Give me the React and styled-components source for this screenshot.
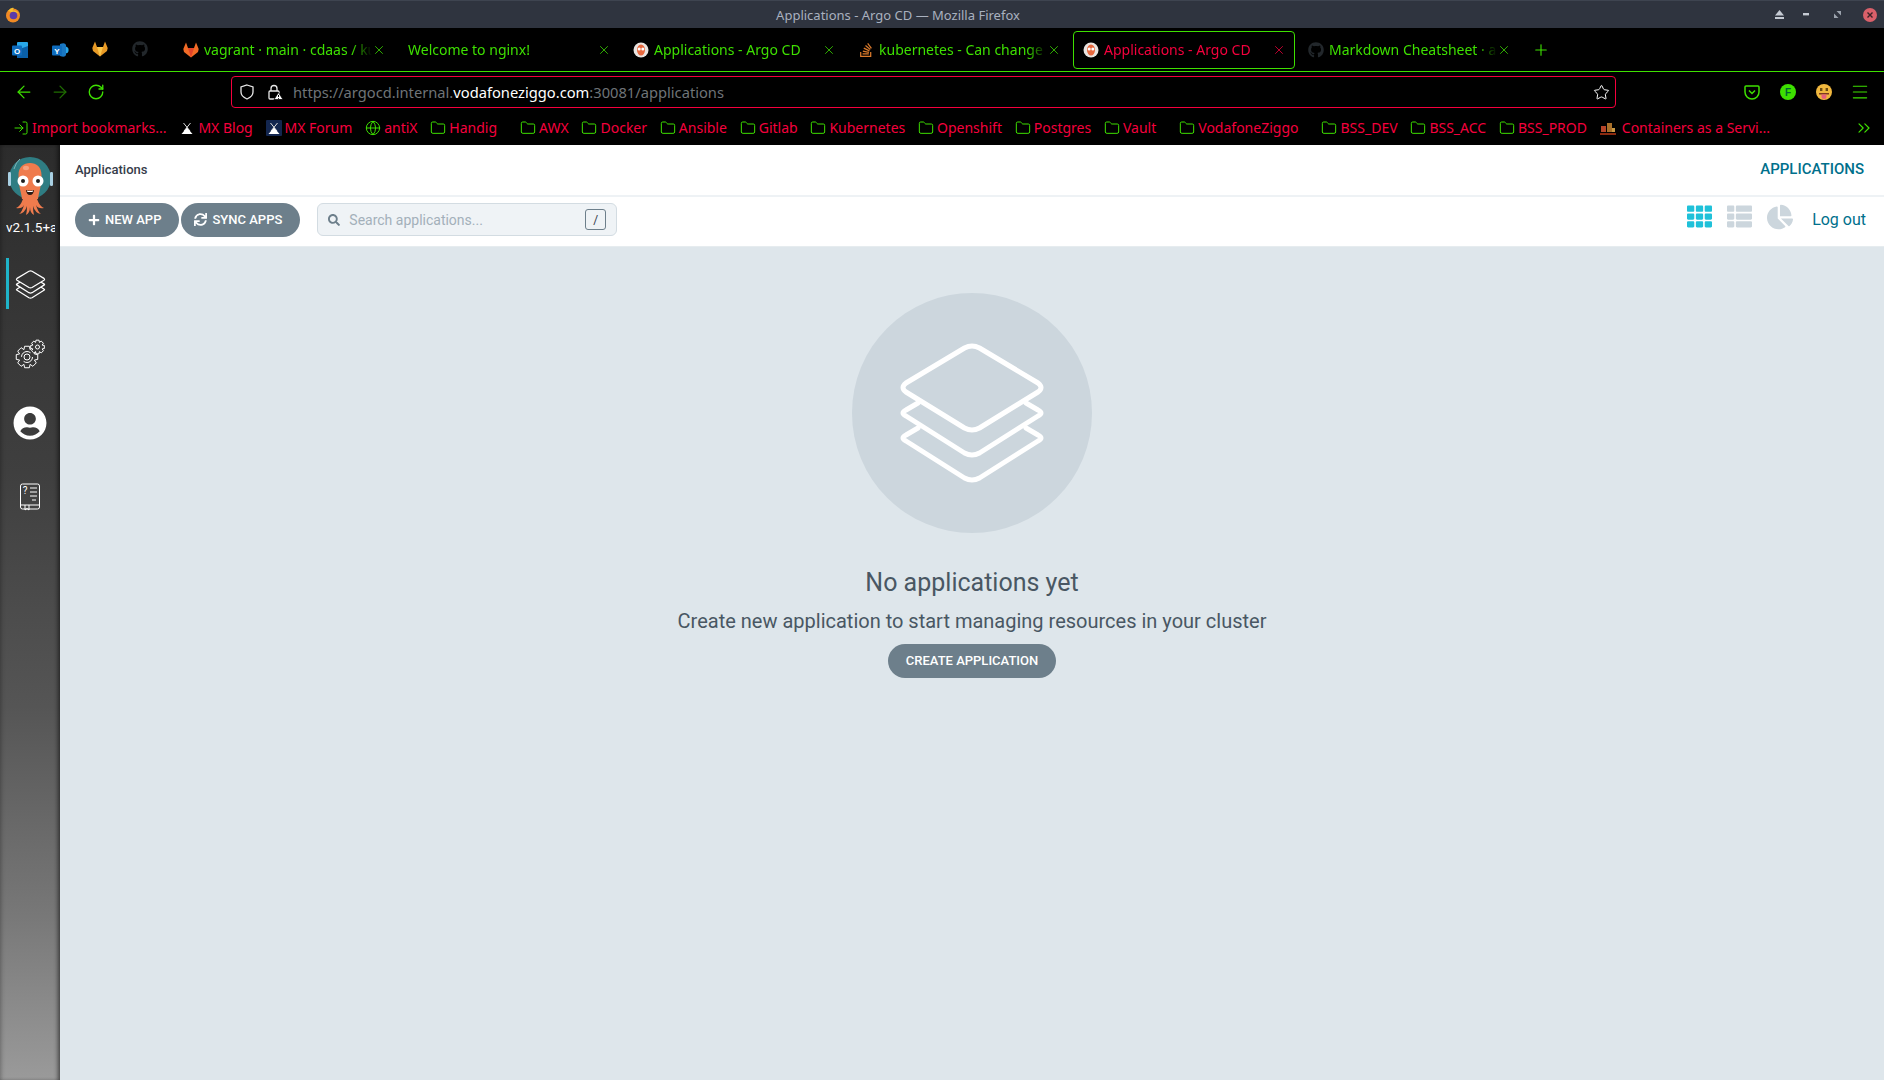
import styled, {createGlobalStyle} from "styled-components";
import {ArrowLeft, ArrowRight, RotateCw, Plus, X, Menu, Star, Folder, Globe, LogIn, ChevronsRight} from "lucide-react";
import {FaPlus, FaSync, FaSearch, FaTh, FaThList, FaChartPie, FaUserCircle, FaGithub, FaStackOverflow} from "react-icons/fa";

const GREEN = "#3ee000";
const RED = "#f5003d";
const TEAL = "#00708c";

const GlobalStyle = createGlobalStyle`
  html, body {
    margin: 0;
    padding: 0;
    height: 100%;
    overflow: hidden;
    background: #000;
  }
  * {
    box-sizing: border-box;
  }
`;

const Page = styled.div`
  width: 1884px;
  height: 1080px;
  display: flex;
  flex-direction: column;
  overflow: hidden;
`;

/* ---------- window title bar ---------- */
const TitleBar = styled.div`
  height: 28px;
  flex: none;
  display: flex;
  align-items: center;
  background: #2f343f;
  border-top: 1px solid #3e4450;
  font: 13px "Noto Sans", sans-serif;
`;
const TitleIcon = styled.div`
  width: 24px;
  padding-left: 5px;
  display: flex;
`;
const TitleText = styled.div`
  flex: 1;
  text-align: center;
  color: #a9b1bf;
`;
const WindowControls = styled.div`
  width: 112px;
  display: flex;
  align-items: center;
  gap: 19px;
  padding-left: 3px;
`;

/* ---------- tabs ---------- */
const TabStrip = styled.div`
  height: 44px;
  flex: none;
  display: flex;
  align-items: center;
  background: #000;
  border-bottom: 1px solid ${GREEN};
  font: 14px "Noto Sans", sans-serif;
`;
const Pinned = styled.div`
  width: 173px;
  padding-right: 13px;
  display: flex;
`;
const PinnedTab = styled.div`
  width: 40px;
  display: flex;
  justify-content: center;
`;
const Tab = styled.div`
  width: 222px;
  height: 38px;
  margin-right: 3px;
  padding: 0 8px 0 9px;
  display: flex;
  align-items: center;
  gap: 5px;
  border-radius: 4px;
  border: 1px solid ${p => (p.$active ? GREEN : "transparent")};
  color: ${p => (p.$active ? RED : GREEN)};

  > svg:last-child {
    margin-left: -5px;
  }
`;
const TabTitle = styled.div`
  flex: 1;
  white-space: nowrap;
  overflow: hidden;
  mask-image: linear-gradient(to left, transparent 0, #000 20px);
`;
const NewTab = styled.div`
  display: flex;
  margin-left: 9px;
  color: ${GREEN};
`;

/* ---------- navigation ---------- */
const NavBar = styled.div`
  height: 40px;
  flex: none;
  display: flex;
  align-items: center;
  background: #000;
  padding-left: 14px;
  color: ${GREEN};
`;
const NavButtons = styled.div`
  width: 217px;
  display: flex;
  align-items: center;
  gap: 16px;

  svg:last-child {
    margin-left: 1px;
  }
`;
const UrlBar = styled.div`
  width: 1385px;
  height: 32px;
  display: flex;
  align-items: center;
  border: 1px solid ${RED};
  border-radius: 4px;
  padding: 0 5px 0 7px;
  color: #fff;
  font: 14.7px "Noto Sans", sans-serif;
`;
const UrlIcons = styled.div`
  width: 54px;
  display: flex;
  gap: 12px;
`;
const UrlText = styled.div`
  flex: 1;
  color: #6f7478;
  white-space: nowrap;

  b {
    font-weight: 400;
    color: #fff;
  }
`;
const Extensions = styled.div`
  margin-left: 128px;
  display: flex;
  align-items: center;
  gap: 20px;

  svg:last-child {
    margin-left: -2px;
  }
`;

/* ---------- bookmarks ---------- */
const BookmarkBar = styled.div`
  height: 33px;
  flex: none;
  display: flex;
  align-items: center;
  background: #000;
  padding: 0 10px 2px 13px;
  color: ${RED};
  font: 14px "Noto Sans", sans-serif;
`;
const Bookmark = styled.div`
  display: flex;
  align-items: center;
  gap: ${p => p.$iconGap || 3}px;
  white-space: nowrap;
  margin-right: ${p => p.$gap || 12.8}px;

  svg {
    color: ${GREEN};
    flex: none;
  }
`;
const Overflow = styled.div`
  margin-left: auto;
  display: flex;
  color: ${GREEN};
`;

/* ---------- argo cd ---------- */
const Body = styled.div`
  flex: 1;
  display: flex;
  min-height: 0;
`;
const Sidebar = styled.div`
  width: 60px;
  flex: none;
  display: flex;
  flex-direction: column;
  color: #fff;
  background: linear-gradient(to bottom, #2c2c2c 0%, #3f3f3f 35%, #555 60%, #777 82%, #9a9a9a 100%);
  box-shadow: inset -4px 0 4px -2px rgba(0, 0, 0, .55), inset 3px 0 4px -2px rgba(0, 0, 0, .3);
`;
const Logo = styled.div`
  height: 72px;
  display: flex;
`;
const Version = styled.div`
  width: 49px;
  height: 32px;
  margin-left: 6px;
  padding-top: 2px;
  overflow: hidden;
  white-space: nowrap;
  font: 13.5px/16px Roboto, sans-serif;
`;
const SideItem = styled.div`
  position: relative;
  height: 70px;
  padding-top: ${p => p.$nudge || 0}px;
  padding-bottom: ${p => p.$lift || 0}px;
  display: flex;
  align-items: center;
  justify-content: center;

  &::before {
    content: "";
    display: ${p => (p.$active ? "block" : "none")};
    position: absolute;
    left: 6px;
    top: 9px;
    width: 3px;
    height: 51px;
    background: #1fb4c9;
  }
`;
const Content = styled.div`
  flex: 1;
  display: flex;
  flex-direction: column;
  background: #dee6eb;
  font-family: Roboto, sans-serif;
`;
const PageHeader = styled.div`
  height: 52px;
  flex: none;
  display: flex;
  align-items: center;
  justify-content: space-between;
  padding: 0 20px 2px 15px;
  background: #fff;
  border-bottom: 2px solid #eef2f5;
`;
const Crumb = styled.div`
  font-size: 13px;
  font-weight: 500;
  color: #363c4a;
`;
const PageTitle = styled.div`
  font-size: 15px;
  font-weight: 500;
  color: ${TEAL};
`;
const Toolbar = styled.div`
  height: 50px;
  flex: none;
  display: flex;
  align-items: center;
  padding: 0 18px 4px 15px;
  background: #fff;
  border-bottom: 1px solid #e6ecef;
`;
const ActionButton = styled.div`
  height: 34px;
  padding: 0 18px 0 13px;
  margin-right: 2px;
  display: flex;
  align-items: center;
  gap: 5px;
  border-radius: 17px;
  background: #6d7f8b;
  color: #fff;
  font-size: 13px;
  font-weight: 500;
  white-space: nowrap;
`;
const Search = styled.div`
  width: 300px;
  height: 33px;
  margin-left: 15px;
  padding: 0 10px;
  display: flex;
  align-items: center;
  gap: 9px;
  border: 1px solid #d3dce2;
  border-radius: 6px;
  background: #eff3f6;
  color: #6d7f8b;
`;
const Placeholder = styled.div`
  flex: 1;
  color: #a3b0ba;
  font-size: 14px;
`;
const KeyHint = styled.div`
  width: 21px;
  height: 21px;
  display: flex;
  align-items: center;
  justify-content: center;
  border: 1px solid #6d7f8b;
  border-radius: 3px;
  font-size: 12px;
  color: #363c4a;
`;
const ViewSwitch = styled.div`
  margin-left: auto;
  display: flex;
  align-items: center;
  gap: 15px;
  margin-right: 19px;
  padding-bottom: 6px;
`;
const ViewIcon = styled.div`
  display: flex;
  color: ${p => (p.$active ? "#1fc1d9" : "#ccd6dd")};
`;
const LogOut = styled.div`
  font-size: 16px;
  color: ${TEAL};
`;
const Empty = styled.div`
  display: flex;
  flex-direction: column;
  align-items: center;
  padding-top: 46px;
`;
const EmptyCircle = styled.div`
  width: 240px;
  height: 240px;
  border-radius: 50%;
  background: #ccd6dd;
  display: flex;
`;
const EmptyTitle = styled.div`
  margin-top: 34px;
  font-size: 25px;
  line-height: 32px;
  color: #495763;
`;
const EmptyText = styled.div`
  margin-top: 8px;
  font-size: 20px;
  line-height: 28px;
  color: #495763;
`;
const CreateButton = styled(ActionButton)`
  margin: 9px 0 0;
  padding: 0 18px 1px;
`;

/* ---------- drawings ---------- */
const gearPath = (cx, cy, inner, outer, teeth) => {
    const pts = [];
    const step = (Math.PI * 2) / teeth;
    for (let i = 0; i < teeth; i++) {
        const a = i * step;
        [[-.5, inner], [-.28, outer], [.28, outer], [.5, inner]].forEach(([o, r]) => {
            pts.push(`${(cx + Math.cos(a + o * step) * r).toFixed(2)} ${(cy + Math.sin(a + o * step) * r).toFixed(2)}`);
        });
    }
    return `M${pts.join("L")}Z`;
};

const FirefoxIcon = () => (
    <svg width="16" height="16" viewBox="0 0 16 16">
        <circle cx="8" cy="8.5" r="7" fill="#f08a24"/>
        <path d="M3 4 Q6 0 9 1 Q7 3 8 3.5 Q12 3 14 7 Q12 5 10 6 Z" fill="#f5c02f"/>
        <circle cx="8.5" cy="8.5" r="3.8" fill="#5b3aa8"/>
    </svg>
);
const OutlookIcon = () => (
    <svg width="18" height="18" viewBox="0 0 18 18">
        <rect x="6" y="1" width="11" height="16" rx="1" fill="#28a8ea"/>
        <path d="M6 9 L17 5 V17 H6 Z" fill="#0a5fa8"/>
        <rect x="1" y="4.5" width="10" height="10" rx="1" fill="#0f6cbd"/>
        <text x="6" y="12.5" fontSize="8" fontWeight="700" textAnchor="middle" fill="#fff" fontFamily="Liberation Sans">O</text>
    </svg>
);
const YammerIcon = () => (
    <svg width="18" height="18" viewBox="0 0 18 18">
        <circle cx="14" cy="9" r="3.6" fill="#28a8ea"/>
        <path d="M9 3 Q14 1 15 4 V14 Q14 17 9 15 Z" fill="#1a78c2"/>
        <rect x="1" y="4.5" width="10" height="10" rx="1" fill="#0f6cbd"/>
        <text x="6" y="12.5" fontSize="8" fontWeight="700" textAnchor="middle" fill="#fff" fontFamily="Liberation Sans">Y</text>
    </svg>
);
const GitlabIcon = ({yellow}) => (
    <svg width="16" height="16" viewBox="0 0 16 16">
        <path d="M8 15.5 L1 10 L0.3 7 L3 0.5 L5 6 H11 L13 0.5 L15.7 7 L15 10 Z" fill={yellow ? "#e89a26" : "#f26b26"}/>
        <path d="M8 15.5 L5 6 H11 Z" fill={yellow ? "#fbc64b" : "#e24329"}/>
    </svg>
);
const ArgoFavicon = () => (
    <svg width="16" height="16" viewBox="0 0 16 16">
        <circle cx="8" cy="8" r="7.5" fill="#e9e4e1"/>
        <ellipse cx="8" cy="8" rx="4" ry="5.5" fill="#e8693f"/>
        <circle cx="6.2" cy="7" r="1.5" fill="#fff"/>
        <circle cx="9.8" cy="7" r="1.5" fill="#fff"/>
    </svg>
);
const MxIcon = ({boxed}) => (
    <svg width="16" height="16" viewBox="0 0 16 16">
        {boxed && <rect width="16" height="16" rx="1" fill="#13264f"/>}
        <path d="M4.5 3 L11 11 M11.5 3 L5 11" fill="none" stroke="#ddd" strokeWidth="1"/>
        <path d="M8 7.5 L13.5 14 H2.5 Z" fill="#fff"/>
    </svg>
);
const ContainersIcon = () => (
    <svg width="16" height="16" viewBox="0 0 16 16">
        <rect x="0" y="13" width="16" height="2" fill="#8c2b10"/>
        <rect x="1" y="6" width="5" height="6" fill="#b5452a"/>
        <rect x="7" y="3" width="5" height="9" fill="#a8702a"/>
        <rect x="12" y="8" width="3" height="4" fill="#c99a45"/>
    </svg>
);
const ShieldIcon = () => (
    <svg width="16" height="16" viewBox="0 0 16 16" fill="none" stroke="#e8e8e8" strokeWidth="1.3">
        <path d="M8 1 L14 3 V8 Q14 12.5 8 15 Q2 12.5 2 8 V3 Z"/>
    </svg>
);
const LockWarnIcon = () => (
    <svg width="16" height="16" viewBox="0 0 16 16" fill="none" stroke="#e8e8e8" strokeWidth="1.3">
        <path d="M4 7 V4.5 A3 3 0 0 1 10 4.5 V7"/>
        <rect x="2" y="7" width="10" height="8" rx="1"/>
        <path d="M11.5 8.5 L16 15.5 H7 Z" fill="#fff" stroke="#000" strokeWidth=".8"/>
        <path d="M11.5 11 V13 M11.5 14 V14.8" stroke="#000" strokeWidth="1"/>
    </svg>
);
const PocketIcon = () => (
    <svg width="16" height="16" viewBox="0 0 16 16" fill="none" stroke={GREEN} strokeWidth="1.5">
        <path d="M2 2 H14 Q15 2 15 3 V8 A7 7 0 0 1 1 8 V3 Q1 2 2 2 Z"/>
        <path d="M5 6.5 L8 9.5 L11 6.5"/>
    </svg>
);
const FBadge = () => (
    <svg width="16" height="16" viewBox="0 0 16 16">
        <circle cx="8" cy="8" r="8" fill={GREEN}/>
        <text x="8" y="11.5" fontSize="10" fontWeight="700" textAnchor="middle" fill="#063" fontFamily="Liberation Sans">F</text>
    </svg>
);
const TongueIcon = () => (
    <svg width="16" height="16" viewBox="0 0 16 16">
        <circle cx="8" cy="8" r="8" fill="#f0b73e"/>
        <rect x="4" y="4" width="2.4" height="3" fill="#6b4a12"/>
        <rect x="9.6" y="4" width="2.4" height="3" fill="#6b4a12"/>
        <rect x="3" y="9" width="10" height="1.5" fill="#7d3a20"/>
        <path d="M5.5 10.5 H10.5 V12.5 A2.5 2.5 0 0 1 5.5 12.5 Z" fill="#e8607a"/>
    </svg>
);
const Eject = () => (
    <svg width="9" height="9" viewBox="0 0 9 9" fill="#c5cad3" style={{flex: "none"}}>
        <path d="M4.5 0 L9 5.5 H0 Z"/>
        <rect y="7" width="9" height="2"/>
    </svg>
);
const Minimize = () => (
    <svg width="6" height="3" viewBox="0 0 6 3" fill="#c5cad3" style={{flex: "none"}}>
        <rect width="6" height="2.4"/>
    </svg>
);
const Restore = () => (
    <svg width="7" height="7" viewBox="0 0 7 7" fill="#9ca3ae" style={{flex: "none", marginLeft: 6}}>
        <path d="M2.5 0 H7 V4.5 Z M0 2.5 V7 H4.5 Z"/>
    </svg>
);
const CloseDot = () => (
    <svg width="14" height="14" viewBox="0 0 14 14" style={{flex: "none", marginLeft: 3}}>
        <circle cx="7" cy="7" r="7" fill="#d9606a"/>
        <path d="M4.5 4.5 L9.5 9.5 M9.5 4.5 L4.5 9.5" stroke="#3a2327" strokeWidth="1.4"/>
    </svg>
);

const ArgoLogo = () => (
    <svg width="60" height="72" viewBox="0 0 60 72">
        <circle cx="30" cy="33" r="21" fill="#2f7d83"/>
        <path d="M14 24 Q16 17 20 14" fill="none" stroke="#7fb2b6" strokeWidth="1"/>
        <rect x="8" y="27" width="3" height="14" rx="1.2" fill="#a9d0e3"/>
        <rect x="50" y="27" width="3" height="14" rx="1.2" fill="#a9d0e3"/>
        <path d="M18.5 30 C18.5 22 23.5 18 30 18 C36.5 18 41.5 22 41.5 30 C41.5 42 39 46 38 54 H22 C21 46 18.5 42 18.5 30 Z" fill="#ef7b4d"/>
        <path d="M23 54 Q20 62 16 63 Q22 64 24 60 Q22 67 19 69 Q25 68 27 61 Q27 67 26 70 Q30 68 30 62 Q30 68 34 70 Q33 67 33 61 Q35 68 41 69 Q38 67 36 60 Q38 64 44 63 Q40 62 37 54 Z" fill="#ef7b4d"/>
        <ellipse cx="26" cy="23" rx="3" ry="2.2" fill="#f6a27f"/>
        <circle cx="23" cy="36" r="5.5" fill="#fff"/>
        <circle cx="38" cy="36" r="5.5" fill="#fff"/>
        <circle cx="23" cy="36" r="2" fill="#1f1f1f"/>
        <circle cx="38" cy="36" r="2" fill="#1f1f1f"/>
        <path d="M26 45 Q30 46.5 34 45 Q33.5 50 30 50 Q26.5 50 26 45 Z" fill="#2a1a15"/>
        <path d="M27 45.6 Q30 46.6 33 45.6 L32.6 47 H27.4 Z" fill="#fff"/>
    </svg>
);

const LAYER_TOP = "M112.5 55 Q120 51 127.5 55 L186 90 Q192 94.5 186 99 L127.5 135 Q120 139 112.5 135 L54 99 Q48 94.5 54 90 Z";
const LAYER_MID = "M66 110 L54 117 Q48 120 54 123 L112.5 160 Q120 164 127.5 160 L186 123 Q192 120 186 117 L174 110";
const LAYER_LOW = "M66 135 L54 142 Q48 145 54 148 L112.5 185 Q120 189 127.5 185 L186 148 Q192 145 186 142 L174 135";

const Layers = ({size, weight}) => (
    <svg width={size} height={size} viewBox="44 46 152 148" fill="none" stroke="#fff" strokeWidth={weight} strokeLinejoin="round" strokeLinecap="round">
        <path d={LAYER_TOP}/>
        <path d={LAYER_MID}/>
        <path d={LAYER_LOW}/>
    </svg>
);
const GearsIcon = () => (
    <svg width="30" height="30" viewBox="0 0 30 30" fill="none" stroke="#fff" strokeWidth="1">
        <path d={gearPath(12, 18, 8, 11, 8)}/>
        <circle cx="12" cy="18" r="3"/>
        <circle cx="12" cy="18" r="5.5" strokeDasharray="12 5"/>
        <path d={gearPath(22.5, 8, 5, 7, 8)} fill="#3a3a3a"/>
        <circle cx="22.5" cy="8" r="2"/>
    </svg>
);
const BookIcon = () => (
    <svg width="22" height="28" viewBox="0 0 22 28" fill="none" stroke="#fff" strokeWidth="1">
        <rect x="1.5" y="1" width="19" height="25" rx="2"/>
        <path d="M1.5 22 H20.5"/>
        <path d="M6 22 V27 L8 25.5 L10 27 V22"/>
        <path d="M11 5 H18 M11 9 H18 M11 13 H18 M13 17 H17"/>
        <text x="6" y="11" fontSize="10" fill="#fff" stroke="none" textAnchor="middle" fontFamily="Roboto">?</text>
    </svg>
);

const tabs = [
    {icon: <GitlabIcon/>, title: "vagrant · main · cdaas / kubernetes"},
    {title: "Welcome to nginx!"},
    {icon: <ArgoFavicon/>, title: "Applications - Argo CD"},
    {icon: <FaStackOverflow size={16} color="#d9792b"/>, title: "kubernetes - Can change the size"},
    {icon: <ArgoFavicon/>, title: "Applications - Argo CD", active: true},
    {icon: <FaGithub size={16} color="#22272b"/>, title: "Markdown Cheatsheet · adam-p/markdown"},
];

const folder = <Folder size={16} strokeWidth={1.5}/>;
const bookmarks = [
    {icon: <LogIn size={16} strokeWidth={1.5}/>, label: "Import bookmarks..."},
    {icon: <MxIcon/>, label: "MX Blog"},
    {icon: <MxIcon boxed/>, label: "MX Forum"},
    {icon: <Globe size={16} strokeWidth={1.5}/>, label: "antiX"},
    {icon: folder, label: "Handig", gap: 23},
    {icon: folder, label: "AWX"},
    {icon: folder, label: "Docker"},
    {icon: folder, label: "Ansible"},
    {icon: folder, label: "Gitlab"},
    {icon: folder, label: "Kubernetes"},
    {icon: folder, label: "Openshift"},
    {icon: folder, label: "Postgres"},
    {icon: folder, label: "Vault", gap: 23},
    {icon: folder, label: "VodafoneZiggo", gap: 23},
    {icon: folder, label: "BSS_DEV"},
    {icon: folder, label: "BSS_ACC"},
    {icon: folder, label: "BSS_PROD"},
    {icon: <ContainersIcon/>, label: "Containers as a Servi...", iconGap: 6},
];

const App = () => {
    return (
        <Page>
            <GlobalStyle/>
            <TitleBar>
                <TitleIcon><FirefoxIcon/></TitleIcon>
                <TitleText>Applications - Argo CD — Mozilla Firefox</TitleText>
                <WindowControls>
                    <Eject/>
                    <Minimize/>
                    <Restore/>
                    <CloseDot/>
                </WindowControls>
            </TitleBar>

            <TabStrip>
                <Pinned>
                    <PinnedTab><OutlookIcon/></PinnedTab>
                    <PinnedTab><YammerIcon/></PinnedTab>
                    <PinnedTab><GitlabIcon yellow/></PinnedTab>
                    <PinnedTab><FaGithub size={16} color="#22272b"/></PinnedTab>
                </Pinned>
                {tabs.map((tab, i) => (
                    <Tab key={i} $active={tab.active}>
                        {tab.icon}
                        <TabTitle>{tab.title}</TabTitle>
                        <X size={14} strokeWidth={1.3}/>
                    </Tab>
                ))}
                <NewTab><Plus size={18} strokeWidth={1.5}/></NewTab>
            </TabStrip>

            <NavBar>
                <NavButtons>
                    <ArrowLeft size={20} strokeWidth={1.5}/>
                    <ArrowRight size={20} strokeWidth={1.5} color="#1f6e00"/>
                    <RotateCw size={18} strokeWidth={1.8}/>
                </NavButtons>
                <UrlBar>
                    <UrlIcons>
                        <ShieldIcon/>
                        <LockWarnIcon/>
                    </UrlIcons>
                    <UrlText>https://argocd.internal.<b>vodafoneziggo.com</b>:30081/applications</UrlText>
                    <Star size={17} strokeWidth={1.4}/>
                </UrlBar>
                <Extensions>
                    <PocketIcon/>
                    <FBadge/>
                    <TongueIcon/>
                    <Menu size={20} strokeWidth={1.3}/>
                </Extensions>
            </NavBar>

            <BookmarkBar>
                {bookmarks.map(b => (
                    <Bookmark key={b.label} $gap={b.gap} $iconGap={b.iconGap}>
                        {b.icon}
                        {b.label}
                    </Bookmark>
                ))}
                <Overflow><ChevronsRight size={20} strokeWidth={1.4}/></Overflow>
            </BookmarkBar>

            <Body>
                <Sidebar>
                    <Logo><ArgoLogo/></Logo>
                    <Version>v2.1.5+a</Version>
                    <SideItem $active><Layers size={31} weight={6}/></SideItem>
                    <SideItem><GearsIcon/></SideItem>
                    <SideItem $lift={2}><FaUserCircle size={34}/></SideItem>
                    <SideItem $nudge={6}><BookIcon/></SideItem>
                </Sidebar>
                <Content>
                    <PageHeader>
                        <Crumb>Applications</Crumb>
                        <PageTitle>APPLICATIONS</PageTitle>
                    </PageHeader>
                    <Toolbar>
                        <ActionButton>
                            <FaPlus size={12}/> NEW APP
                        </ActionButton>
                        <ActionButton>
                            <FaSync size={13}/> SYNC APPS
                        </ActionButton>
                        <Search>
                            <FaSearch size={12}/>
                            <Placeholder>Search applications...</Placeholder>
                            <KeyHint>/</KeyHint>
                        </Search>
                        <ViewSwitch>
                            <ViewIcon $active><FaTh size={25}/></ViewIcon>
                            <ViewIcon><FaThList size={25}/></ViewIcon>
                            <ViewIcon><FaChartPie size={26}/></ViewIcon>
                        </ViewSwitch>
                        <LogOut>Log out</LogOut>
                    </Toolbar>
                    <Empty>
                        <EmptyCircle>
                            <svg width="240" height="240" viewBox="0 0 240 240" fill="none" stroke="#fff" strokeWidth="5" strokeLinecap="round" strokeLinejoin="round">
                                <path d={LAYER_TOP}/>
                                <path d={LAYER_MID}/>
                                <path d={LAYER_LOW}/>
                            </svg>
                        </EmptyCircle>
                        <EmptyTitle>No applications yet</EmptyTitle>
                        <EmptyText>Create new application to start managing resources in your cluster</EmptyText>
                        <CreateButton>CREATE APPLICATION</CreateButton>
                    </Empty>
                </Content>
            </Body>
        </Page>
    );
};

export default App;
